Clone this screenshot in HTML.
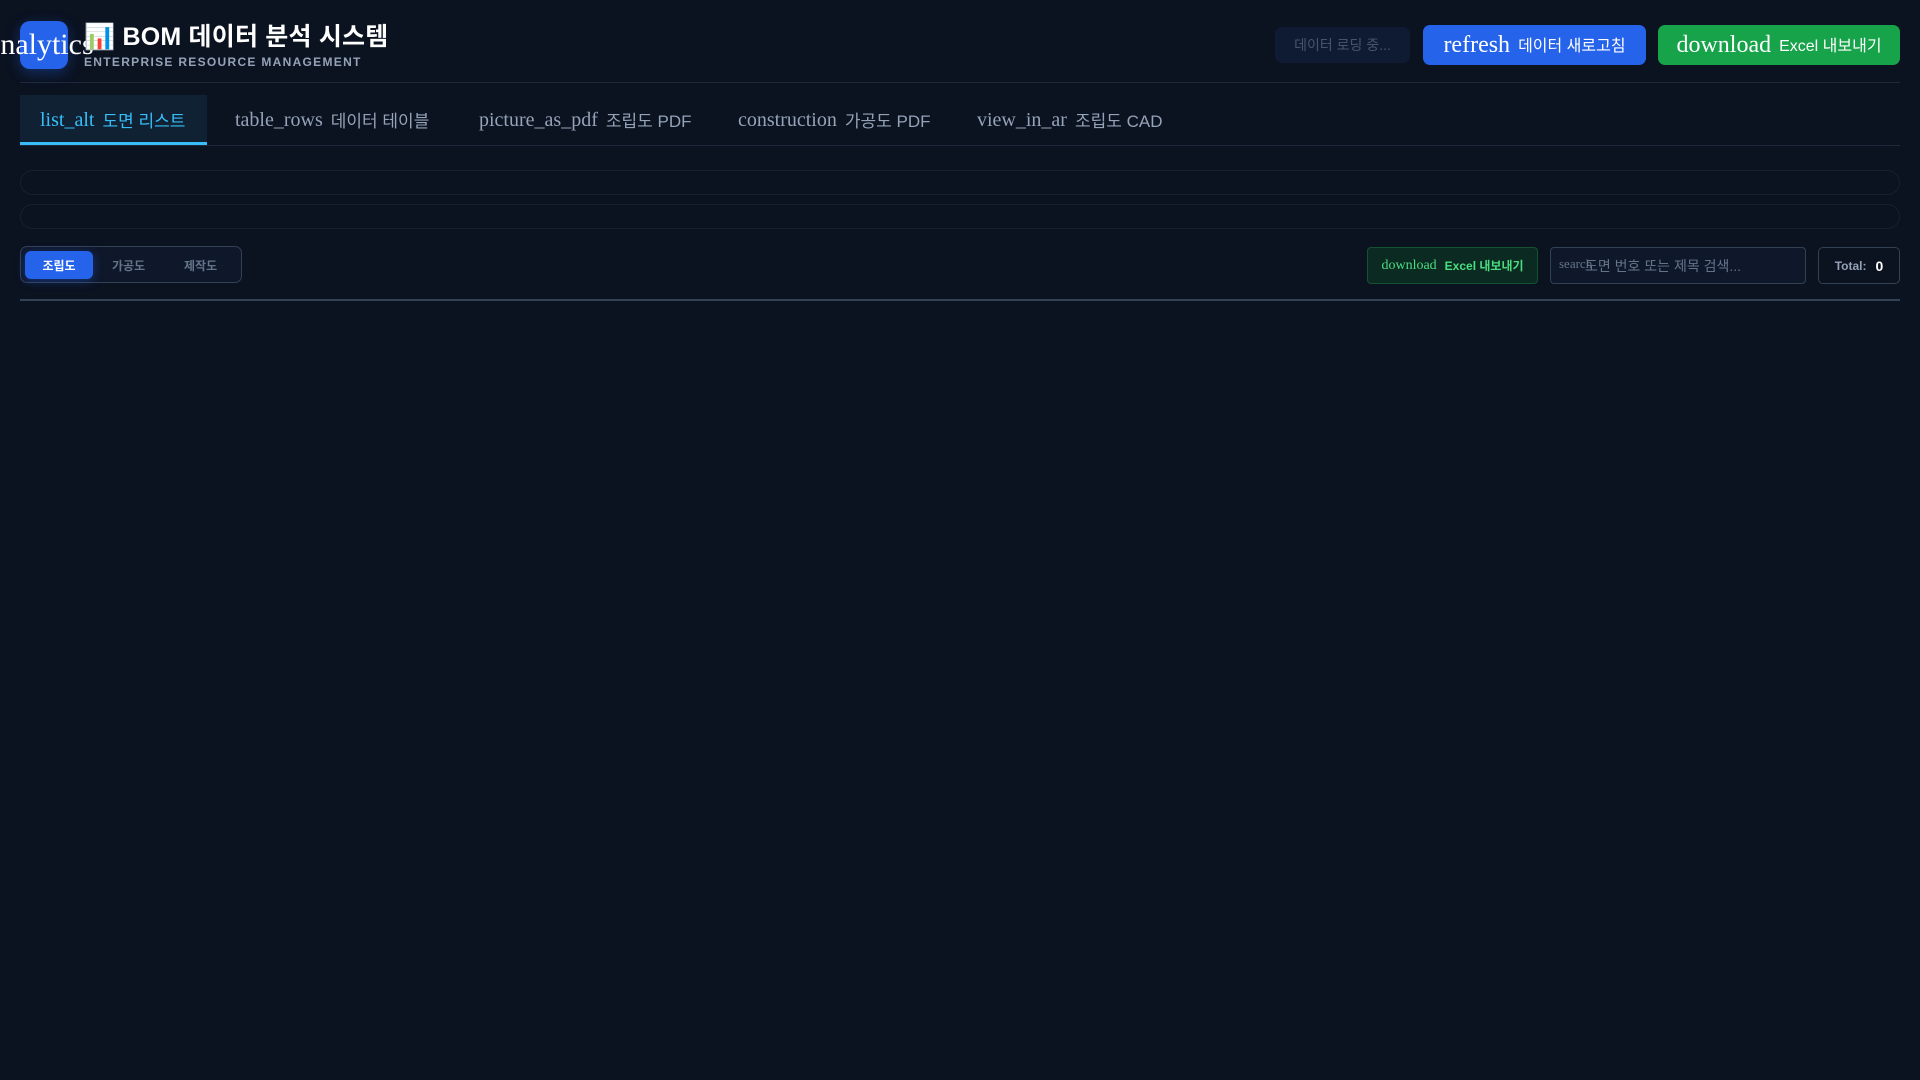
<!DOCTYPE html>
<html><head><meta charset="utf-8"><style>
*{box-sizing:border-box;margin:0;padding:0}
body{width:1920px;height:1080px;background:#0b1220;font-family:"Liberation Sans","Noto Sans CJK KR",sans-serif;position:relative;overflow:hidden;color:#e2e8f0}
.abs{position:absolute}
.ser{font-family:"Liberation Serif",serif}
.logo{left:20px;top:21px;width:48px;height:48px;background:#2563eb;border-radius:10px;box-shadow:0 4px 14px rgba(37,99,235,.35)}
.logotxt{left:-13px;top:28px;font-size:30px;color:#fff;white-space:nowrap}
.title{left:84px;top:17px;font-size:25px;letter-spacing:0.2px;font-weight:bold;color:#fff;white-space:nowrap}
.sub{left:84px;top:55px;font-size:12px;font-weight:bold;letter-spacing:1.3px;color:#94a3b8}
.hline{left:20px;top:82px;width:1880px;height:1px;background:#1e293b}
.btn{display:flex;align-items:center;justify-content:center;border-radius:7px;white-space:nowrap}
.tab{top:95px;height:50px;display:flex;align-items:center;color:#94a3b8;white-space:nowrap}
.tab .i{font-size:20px;margin-right:8px}
.tab .t{font-size:17px;position:relative;top:-1px}
.bar{left:20px;width:1880px;height:25px;border:1px solid #172033;border-radius:13px}
</style></head><body>
<div class="abs logo"></div>
<div class="abs logotxt ser">analytics</div>
<div class="abs title">📊 BOM 데이터 분석 시스템</div>
<div class="abs sub">ENTERPRISE RESOURCE MANAGEMENT</div>

<div class="abs btn" style="left:1275px;top:27px;width:135px;height:36px;background:#0f1b33;color:#475569;font-size:14px">데이터 로딩 중...</div>
<div class="abs btn" style="left:1423px;top:25px;width:223px;height:40px;background:#2563eb;color:#fff"><span class="ser" style="font-size:24px;margin-right:8px">refresh</span><span style="font-size:16px;position:relative;top:-1px">데이터 새로고침</span></div>
<div class="abs btn" style="left:1658px;top:25px;width:242px;height:40px;background:#16a34a;color:#fff"><span class="ser" style="font-size:24px;margin-right:8px">download</span><span style="font-size:16px;position:relative;top:-1px">Excel 내보내기</span></div>
<div class="abs hline"></div>

<div class="abs" style="left:20px;top:95px;width:187px;height:50px;background:#0f2133;border-bottom:3px solid #38bdf8"></div>
<div class="abs" style="left:20px;top:145px;width:1880px;height:1px;background:#1e293b"></div>
<div class="abs tab" style="left:40px;color:#38bdf8"><span class="i ser">list_alt</span><span class="t">도면 리스트</span></div>
<div class="abs tab" style="left:235px"><span class="i ser">table_rows</span><span class="t">데이터 테이블</span></div>
<div class="abs tab" style="left:479px"><span class="i ser">picture_as_pdf</span><span class="t">조립도 PDF</span></div>
<div class="abs tab" style="left:738px"><span class="i ser">construction</span><span class="t">가공도 PDF</span></div>
<div class="abs tab" style="left:977px"><span class="i ser">view_in_ar</span><span class="t">조립도 CAD</span></div>

<div class="abs bar" style="top:170px"></div>
<div class="abs bar" style="top:204px"></div>

<div class="abs" style="left:20px;top:246px;width:222px;height:37px;border:1px solid #334155;border-radius:7px;background:#0f172a"></div>
<div class="abs btn" style="left:25px;top:251px;width:68px;height:28px;background:#2563eb;color:#fff;font-size:12px;font-weight:bold;border-radius:6px;box-shadow:0 2px 10px rgba(37,99,235,.4)">조립도</div>
<div class="abs" style="left:112px;top:257px;font-size:12px;font-weight:bold;color:#64748b">가공도</div>
<div class="abs" style="left:184px;top:257px;font-size:12px;font-weight:bold;color:#64748b">제작도</div>

<div class="abs btn" style="left:1367px;top:247px;width:171px;height:37px;background:#0b2a22;border:1px solid #14532d;color:#4ade80;border-radius:4px"><span class="ser" style="font-size:14px;margin-right:8px">download</span><span style="font-size:12px;font-weight:bold">Excel 내보내기</span></div>
<div class="abs" style="left:1550px;top:247px;width:256px;height:37px;background:#0f172a;border:1px solid #334155;border-radius:4px;display:flex;align-items:center;padding-left:8px;color:#64748b;white-space:nowrap;overflow:hidden"><span class="ser" style="font-size:13px;width:26px;overflow:visible;position:relative;top:-2px">search</span><span style="font-size:14px">도면 번호 또는 제목 검색...</span></div>
<div class="abs btn" style="left:1818px;top:247px;width:82px;height:37px;border:1px solid #334155;border-radius:5px;font-size:12px;font-weight:bold;color:#94a3b8">Total:<span style="color:#fff;font-size:14px;margin-left:9px">0</span></div>

<div class="abs" style="left:20px;top:299px;width:1880px;height:2px;background:#334155"></div>
</body></html>
